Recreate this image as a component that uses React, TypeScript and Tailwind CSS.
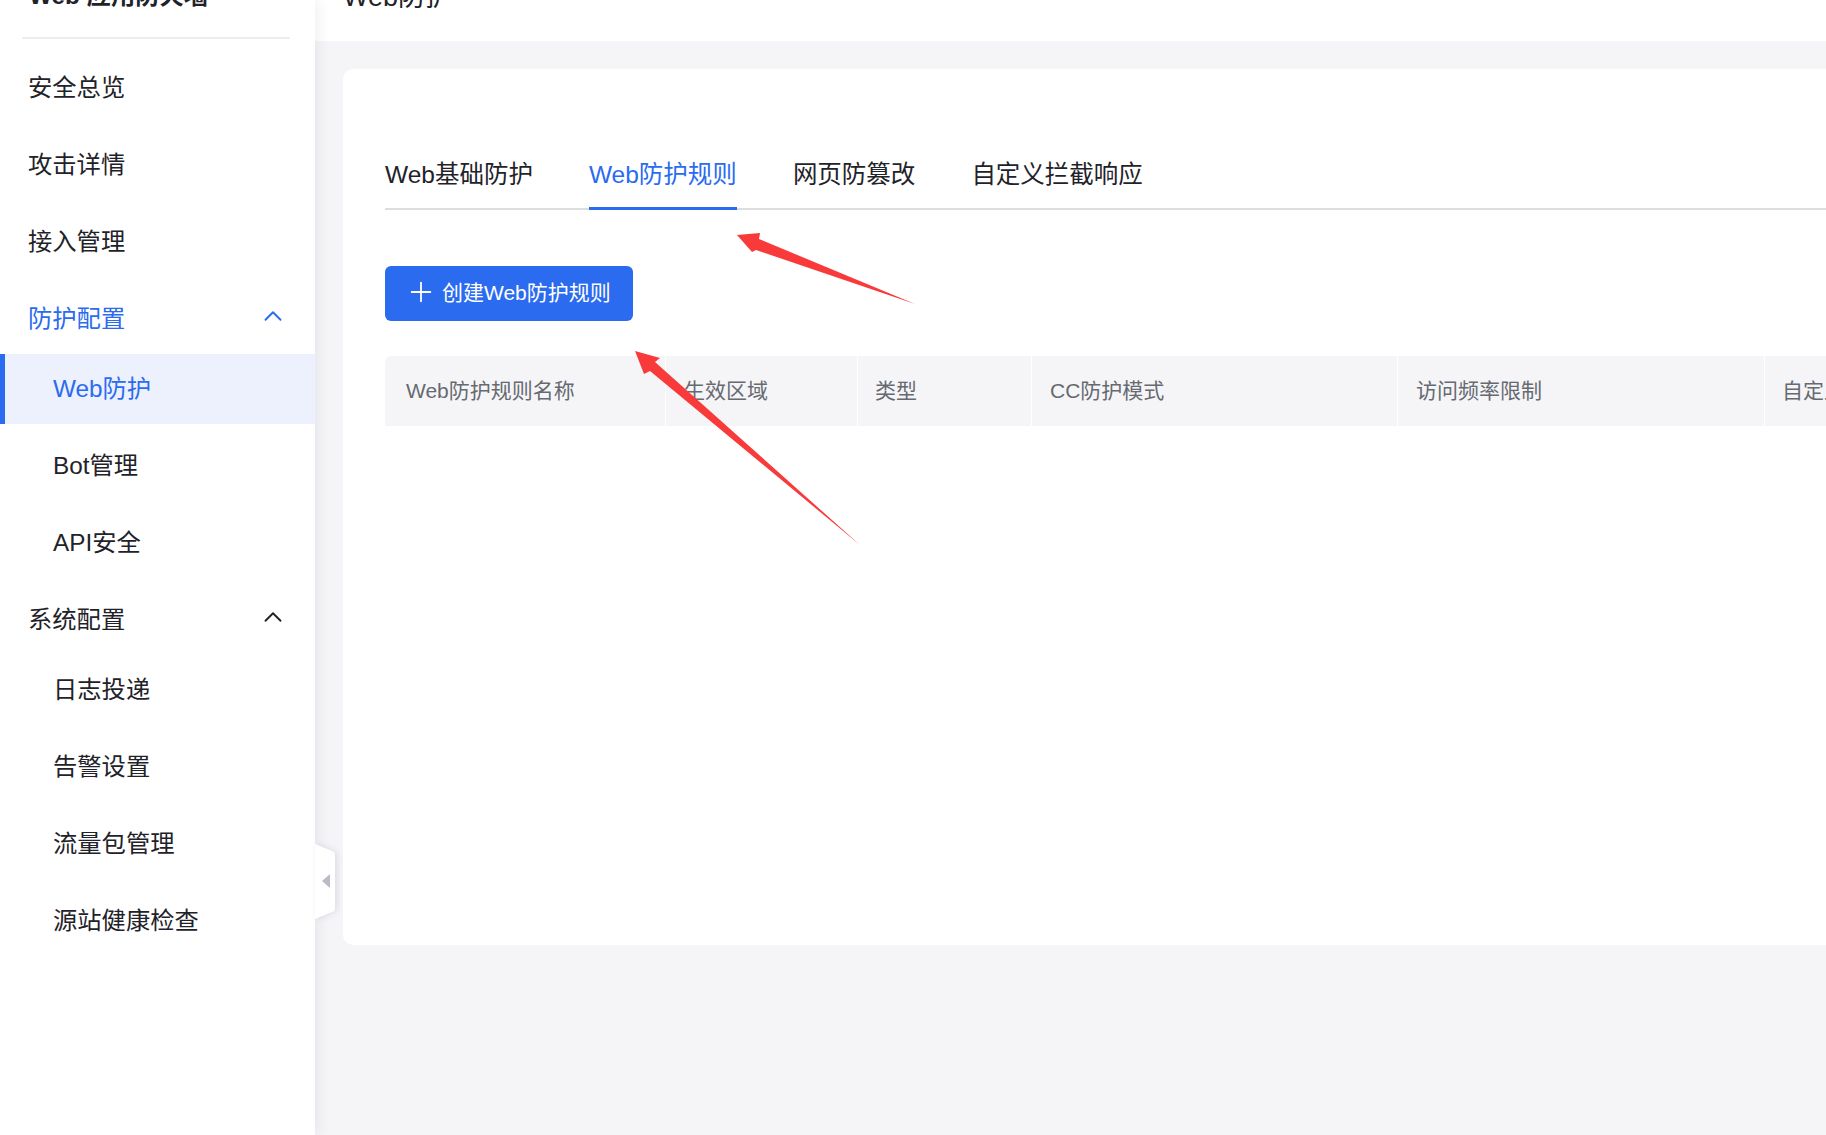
import { ChevronUp, Plus } from 'lucide-react';

const ACTIVE = 'text-[#2b6bf0]';

function MenuItem({ label, sub, active }: { label: string; sub?: boolean; active?: boolean }) {
  if (active) {
    return (
      <div className={`flex h-[70px] items-center border-l-[5px] border-[#2b6bf0] bg-[#edf1fd] pl-[48px] text-[24.3px] ${ACTIVE}`}>
        {label}
      </div>
    );
  }
  return (
    <div className={`flex h-[70px] items-center text-[24.3px] text-[#1f2329] ${sub ? 'pl-[53px]' : 'pl-[28px] pt-[2px]'}`}>
      {label}
    </div>
  );
}

function MenuGroup({ label, open }: { label: string; open?: boolean }) {
  return (
    <div className={`flex h-[70px] items-center justify-between pl-[28px] pr-[33px] text-[24.3px] ${open ? `pt-[2px] ${ACTIVE}` : 'text-[#1f2329]'}`}>
      <span>{label}</span>
      <ChevronUp className="-mr-[6px] -mt-[6px] size-[30px]" strokeWidth={1.5} />
    </div>
  );
}

function Sidebar() {
  return (
    <aside className="relative z-10 h-full w-[315px] shrink-0 bg-white shadow-[2px_0_14px_rgba(30,40,70,0.08)]">
      <div className="ml-[22px] mr-[25px] flex h-[39px] flex-col border-b-2 border-[#ebecef]">
        <div className="-mt-[16px] pl-[7px] text-[24.3px] font-bold leading-[24px] text-[#1f2329]">Web 应用防火墙</div>
      </div>
      <nav className="mt-[13px] flex flex-col">
        <div className="flex flex-col gap-[7px]">
          <MenuItem label="安全总览" />
          <MenuItem label="攻击详情" />
          <MenuItem label="接入管理" />
          <MenuGroup label="防护配置" open />
        </div>
        <div className="mt-px flex flex-col gap-[7px]">
          <MenuItem label="Web防护" active />
          <MenuItem label="Bot管理" sub />
          <MenuItem label="API安全" sub />
        </div>
        <div className="mt-[7px]">
          <MenuGroup label="系统配置" />
        </div>
        <div className="flex flex-col gap-[7px]">
          <MenuItem label="日志投递" sub />
          <MenuItem label="告警设置" sub />
          <MenuItem label="流量包管理" sub />
          <MenuItem label="源站健康检查" sub />
        </div>
      </nav>
      {/* collapse handle */}
      <svg className="absolute left-[315px] top-[844px] h-[75px] w-[20px] drop-shadow-[2px_0_3px_rgba(30,40,70,0.12)]" viewBox="0 0 20 75">
        <path d="M0 0L17 7Q20 8 20 11V64Q20 67 17 68L0 75Z" fill="#fff" />
        <path d="M15 30V44L7 37Z" fill="#b9bcc4" />
      </svg>
    </aside>
  );
}

const columns = [
  { title: 'Web防护规则名称', width: 'w-[281px] pl-[21px]' },
  { title: '生效区域', width: 'w-[192px] pl-[18px]' },
  { title: '类型', width: 'w-[174px] pl-[17px]' },
  { title: 'CC防护模式', width: 'w-[366px] pl-[18px]' },
  { title: '访问频率限制', width: 'w-[367px] pl-[18px]' },
  { title: '自定义拦截响应', width: 'w-[200px] pl-[17px]' },
];

const tabs = ['Web基础防护', 'Web防护规则', '网页防篡改', '自定义拦截响应'];

function Content() {
  return (
    <main className="min-w-0 flex-1">
      <div className="flex h-[41px] flex-col bg-white pl-[28px]">
        <div className="-mt-[15px] text-[27px] leading-[24px] text-[#1f2329]">Web防护</div>
      </div>
      <section className="ml-[28px] mt-[28px] h-[876px] overflow-hidden rounded-l-[10px] bg-white pl-[42px]">
        <div className="flex h-[141px] items-end gap-[56px] border-b-2 border-[#dcdde0] pt-[88px]">
          {tabs.map((t, i) => (
            <div
              key={t}
              className={`-mb-[2px] whitespace-nowrap pb-[16px] pt-[2px] text-[24.5px] leading-[32px] ${i === 1 ? `border-b-[3px] border-[#2b6bf0] ${ACTIVE}` : 'border-b-[3px] border-transparent text-[#1f2329]'}`}
            >
              {t}
            </div>
          ))}
        </div>
        <button className="mt-[56px] flex h-[55px] w-[248px] items-center rounded-[6px] bg-[#2b6bf0] pb-[2px] pl-[24px] text-[21px] text-white">
          <Plus className="-ml-[4px] -mt-[1px] size-[32px]" strokeWidth={1.35} />
          <span className="ml-[5px]">创建Web防护规则</span>
        </button>
        <div className="mt-[35px] flex h-[70px] w-[1500px] overflow-hidden rounded-tl-[6px] text-[21px] text-[#666a70]">
          {columns.map((c) => (
            <div key={c.title} className={`flex shrink-0 items-center border-r border-white bg-[#f5f5f8] ${c.width}`}>
              {c.title}
            </div>
          ))}
        </div>
      </section>
    </main>
  );
}

export default function App() {
  return (
    <div className="relative flex h-[1135px] w-full overflow-hidden bg-[#f5f5f8] font-['Liberation_Sans','Noto_Sans_CJK_SC',sans-serif]">
      <Sidebar />
      <Content />
      {/* red annotation arrows drawn on the screenshot */}
      <svg className="pointer-events-none absolute left-0 top-0 z-20 h-[1135px] w-[1826px]" viewBox="0 0 1826 1135">
        <path d="M737 235L760 233L759 239L915 304L756 250L752 252Z" fill="#f93a3a" />
        <path d="M635 351L660 358L655 362L860 545L650 371L644 374Z" fill="#f93a3a" />
      </svg>
    </div>
  );
}
